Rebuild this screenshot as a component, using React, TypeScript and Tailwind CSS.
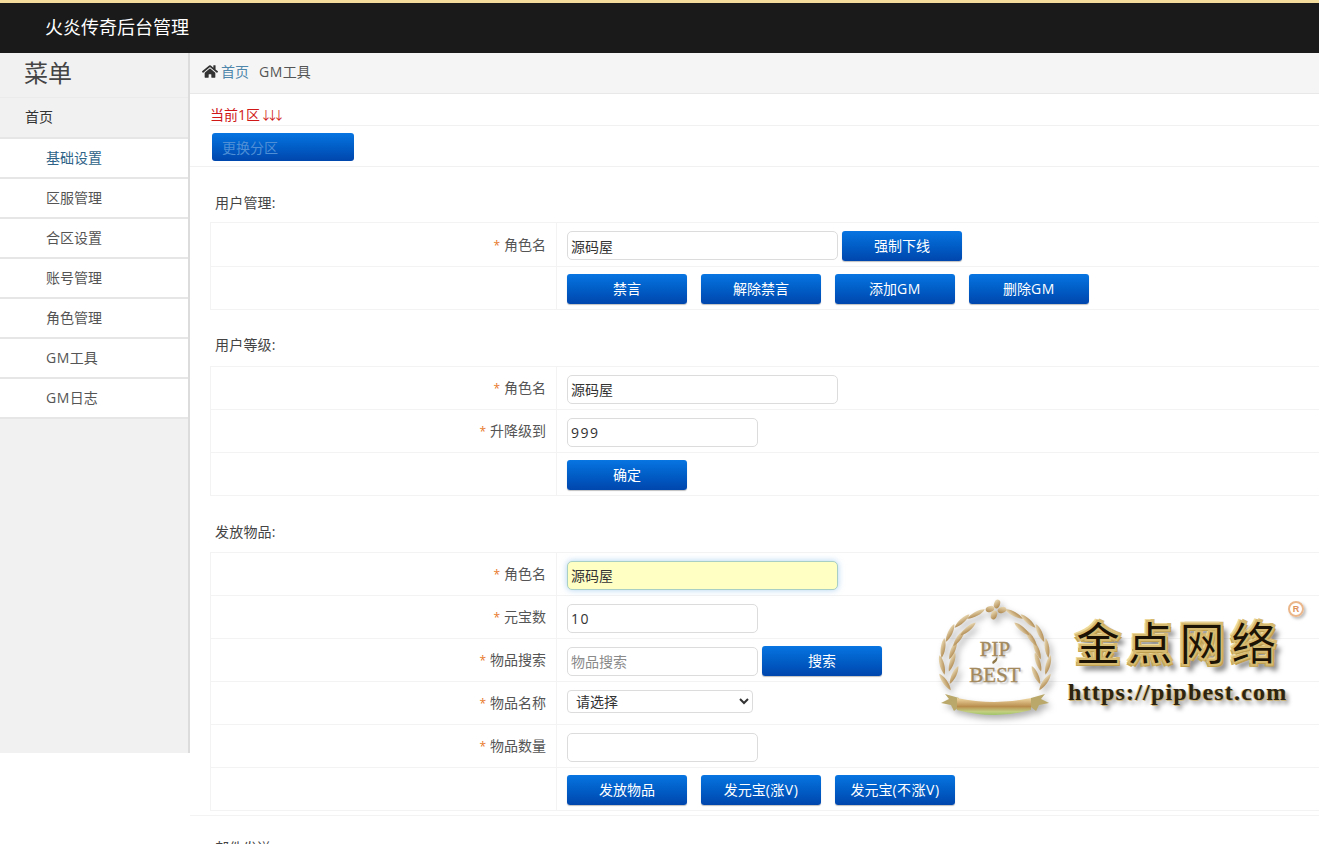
import React from "react";
import { FaHome } from "react-icons/fa";

const font = "font-['Open_Sans','Noto_Sans_CJK_SC','Liberation_Sans',sans-serif]";

function Btn({ children }: { children: React.ReactNode }) {
  return (
    <button className="h-[30px] w-[120px] shrink-0 rounded-[3px] bg-gradient-to-b from-[#0875e1] to-[#0046ad] text-[14px] leading-[30px] text-white shadow-[0_1px_1px_rgba(0,0,0,0.25)]">
      {children}
    </button>
  );
}

function Input({ value, placeholder, wide, hl, num }: { value?: string; placeholder?: string; wide?: boolean; hl?: boolean; num?: boolean }) {
  return (
    <input
      readOnly
      value={value ?? ""}
      placeholder={placeholder}
      className={`h-[29px] shrink-0 rounded-[5px] border px-[3px] text-[14px] text-[#333] outline-none placeholder:text-[#8a8a8a] ${num ? "tracking-[1.5px]" : ""} ${wide ? "w-[271px]" : "w-[191px]"} ${hl ? "border-[#a9cfc4] bg-[#ffffc4] text-[#111] shadow-[0_0_6px_rgba(120,180,230,0.6)]" : "border-[#dcdcdc] bg-white"}`}
    />
  );
}

function Row({ label, h = 43, children }: { label?: string; h?: number; children: React.ReactNode }) {
  return (
    <div className="flex border-b border-[#f3f3f3]" style={{ height: h }}>
      <div className={`w-[346px] shrink-0 border-r border-[#f3f3f3] pr-[10px] text-right text-[14px] leading-[20px] text-[#555] ${h === 44 ? "pt-[12px]" : "pt-[11px]"}`}>
        {label && (
          <>
            <span className="mr-[4px] text-[12px] text-[#e8792a]">*</span>
            {label}
          </>
        )}
      </div>
      <div className="flex flex-1 items-center gap-[4px] pl-[10px] pt-[2px]">{children}</div>
    </div>
  );
}

function Section({ title, top, gap, children }: { title: string; top: string; gap: string; children: React.ReactNode }) {
  return (
    <section className={top}>
      <h3 className="pl-[25px] text-[14px] leading-[20px] tracking-[0.2px] text-[#444]">{title}</h3>
      <div className={`${gap} ml-[20px] border-l border-t border-[#f3f3f3]`}>{children}</div>
    </section>
  );
}

const menu = ["基础设置", "区服管理", "合区设置", "账号管理", "角色管理", "GM工具", "GM日志"];

const Wide = ({ children }: { children: React.ReactNode }) => <span className="tracking-[0.5px]">{children}</span>;

const outer = [
  [-50, 22, -35], [-53, 5, -15], [-52, -12, 8], [-45, -27, 25], [-33, -39, 48], [-19, -46, 62],
];
const inner = [
  [-41, 15, 25], [-43, 2, 18], [-42, -10, 22], [-36, -22, 35], [-27, -31, 50],
];
const leaf = "M0 -10 C3 -6 3 5 0 10 C-3 5 -3 -6 0 -10 Z";

function Wreath() {
  return (
    <svg width="120" height="124" viewBox="-60 -62 120 124" className="absolute left-0 top-0 drop-shadow-[3px_4px_3px_rgba(0,0,0,0.3)]">
      <defs>
        <linearGradient id="gold" x1="0" y1="0" x2="1" y2="1">
          <stop offset="0" stopColor="#f3e6c4" />
          <stop offset="1" stopColor="#a67c3f" />
        </linearGradient>
        <linearGradient id="rib" x1="0" y1="0" x2="0" y2="1">
          <stop offset="0" stopColor="#f0d8a4" />
          <stop offset="0.5" stopColor="#b98d4e" />
          <stop offset="0.8" stopColor="#c3cf80" />
          <stop offset="1" stopColor="#9fc468" />
        </linearGradient>
      </defs>
      {[...outer, ...inner].map(([x, y, r], i) => (
        <g key={i}>
          <path d={leaf} transform={`translate(${x} ${y}) rotate(${r})`} fill="url(#gold)" />
          <path d={leaf} transform={`translate(${-x} ${y}) rotate(${-r})`} fill="url(#gold)" />
        </g>
      ))}
      <g fill="url(#gold)">
        <ellipse cx="2" cy="-56" rx="3" ry="4.5" transform="rotate(20 2 -56)" />
        <ellipse cx="7" cy="-50" rx="3" ry="4.5" transform="rotate(70 7 -50)" />
        <ellipse cx="-1" cy="-45" rx="3" ry="4.5" transform="rotate(20 -1 -45)" />
        <ellipse cx="-5" cy="-51" rx="3" ry="4.5" transform="rotate(70 -5 -51)" />
      </g>
      <path d="M-2 4 C2 2 3 -1 2 -3 C1 -1 -1 0 -2 1 C-3 2 -3 3 -2 4 Z" fill="#8f7748" />
      <path d="M-50 34 L-36 38 L-36 47 L-41 51 L-44 45 L-54 43 L-46 39 Z M50 34 L36 38 L36 47 L41 51 L44 45 L54 43 L46 39 Z" fill="#b9a869" />
      <path d="M-38 38 Q0 46 36 38 L36 50 Q0 60 -38 50 Z" fill="url(#rib)" />
    </svg>
  );
}

function Watermark() {
  return (
    <div className="pointer-events-none absolute left-[935px] top-[598px] h-[126px] w-[384px]">
      <Wreath />
      <div className="absolute left-0 top-[38px] w-[120px] text-center font-['Liberation_Serif',serif] text-[21px] leading-[26px] text-[#a3895e] [-webkit-text-stroke:0.4px_#a3895e] [text-shadow:2px_2px_2px_rgba(0,0,0,0.25)]">
        <div>PIP</div>
        <div>BEST</div>
      </div>
      <div className="absolute left-[140px] top-[11px] whitespace-nowrap font-['Noto_Sans_CJK_SC',serif] text-[46px] font-bold leading-[62px] tracking-[6px] text-[#1c1305] [-webkit-text-stroke:2px_#d6ba70] [text-shadow:2px_2px_0_#bfa050,-2px_-2px_0_#ecd79c,2px_-2px_0_#d6ba70,-2px_2px_0_#c4a556,5px_6px_5px_rgba(0,0,0,0.5)]">
        金点网络
      </div>
      <div className="absolute left-[133px] top-[79px] whitespace-nowrap font-['Liberation_Serif',serif] text-[24px] font-bold leading-[30px] tracking-[1.2px] text-[#2c2410] [text-shadow:1px_1px_0_#c9b27a,-1px_0_0_#d8c48c,3px_4px_4px_rgba(0,0,0,0.45)]">
        https://pipbest.com
      </div>
      <div className="absolute left-[353px] top-[3px] flex h-[16px] w-[16px] items-center justify-center rounded-full border-2 border-[#eab68a] font-['Liberation_Sans',sans-serif] text-[9px] font-bold leading-none text-[#e0935a] [box-shadow:2px_2px_3px_rgba(0,0,0,0.25)]">
        R
      </div>
    </div>
  );
}

export default function App() {
  return (
    <div className={`relative h-[844px] w-[1319px] overflow-hidden bg-white ${font}`}>
      <header className="flex h-[53px] items-center border-t-[3px] border-[#f3dc9c] bg-[#1a1a1a] pb-[2px] pl-[45px] text-[18px] text-white">
        火炎传奇后台管理
      </header>
      <div className="flex items-start">
        <aside className="h-[700px] w-[190px] shrink-0 border-r-2 border-[#dcdcdc] bg-[#f1f1f1]">
          <div className="h-[45px] border-b border-[#ebebeb] pl-[24px] text-[24px] leading-[39px] text-[#444]">菜单</div>
          <div className="h-[41px] border-b-2 border-[#e6e6e6] pl-[25px] text-[14px] leading-[38px] text-[#333]">首页</div>
          {menu.map((m, i) => (
            <div key={m} className={`h-[40px] border-b-2 border-[#e6e6e6] bg-white pl-[46px] text-[14px] leading-[38px] ${i === 0 ? "text-[#2f6488]" : "text-[#555]"}`}>
              {m.startsWith("GM") ? (
                <>
                  <Wide>GM</Wide>
                  {m.slice(2)}
                </>
              ) : (
                m
              )}
            </div>
          ))}
        </aside>
        <main className="min-w-0 flex-1">
          <nav className="flex h-[41px] items-center border-b border-[#e8e8e8] bg-[#f5f5f5] pb-[4px] pl-[12px] text-[14px]">
            <FaHome className="h-[15px] w-[16px] text-[#333]" />
            <span className="ml-[3px] text-[#4e87ab]">首页</span>
            <span className="ml-[10px] text-[#555]">
              <Wide>GM</Wide>工具
            </span>
          </nav>
          <div className="ml-[20px] mt-[11px] h-[21px] border-b border-[#f1f1f1] text-[14px] leading-[20px] text-[#d01818]">
            当前1区<span className="text-[12px] tracking-[-5.5px]">↓↓↓</span>
          </div>
          <div className="h-[41px] border-b border-[#f1f1f1] pl-[22px] pt-[7px]">
            <button className="h-[28px] w-[142px] rounded-[3px] bg-gradient-to-b from-[#0875e1] to-[#0046ad] pl-[10px] text-left text-[14px] text-[#4f8fd6]">更换分区</button>
          </div>
          <Section title="用户管理:" top="mt-[26px]" gap="mt-[9px]">
            <Row label="角色名" h={44}>
              <Input value="源码屋" wide />
              <Btn>强制下线</Btn>
            </Row>
            <Row>
              <div className="flex gap-[14px]">
                <Btn>禁言</Btn>
                <Btn>解除禁言</Btn>
                <Btn>添加<Wide>GM</Wide></Btn>
                <Btn>删除<Wide>GM</Wide></Btn>
              </div>
            </Row>
          </Section>
          <Section title="用户等级:" top="mt-[25px]" gap="mt-[11px]">
            <Row label="角色名"><Input value="源码屋" wide /></Row>
            <Row label="升降级到"><Input value="999" num /></Row>
            <Row><Btn>确定</Btn></Row>
          </Section>
          <Section title="发放物品:" top="mt-[26px]" gap="mt-[10px]">
            <Row label="角色名"><Input value="源码屋" wide hl /></Row>
            <Row label="元宝数"><Input value="10" num /></Row>
            <Row label="物品搜索"><Input placeholder="物品搜索" /><Btn>搜索</Btn></Row>
            <Row label="物品名称">
              <select className="mb-[6px] h-[23px] w-[186px] rounded-[4px] border border-[#dcdcdc] bg-white pl-[4px] text-[14px] text-[#333]">
                <option>请选择</option>
              </select>
            </Row>
            <Row label="物品数量"><Input /></Row>
            <Row>
              <div className="flex gap-[14px]">
                <Btn>发放物品</Btn>
                <Btn>发元宝<Wide>(涨V)</Wide></Btn>
                <Btn>发元宝<Wide>(不涨V)</Wide></Btn>
              </div>
            </Row>
          </Section>
          <div className="mt-[4px] border-t border-[#f3f3f3]" />
          <h3 className="mt-[22px] pl-[25px] text-[14px] leading-[20px] text-[#444]">邮件发送:</h3>
        </main>
      </div>
      <Watermark />
    </div>
  );
}
